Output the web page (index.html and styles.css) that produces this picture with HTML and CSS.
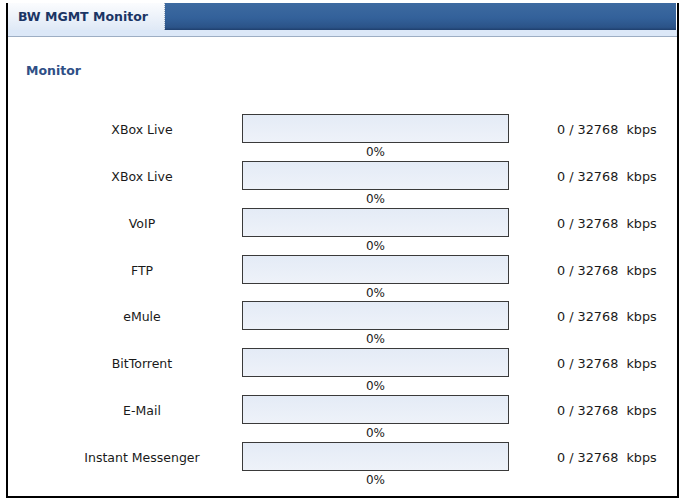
FILE: index.html
```html
<!DOCTYPE html>
<html>
<head>
<meta charset="utf-8">
<link rel="stylesheet" href="styles.css">
</head>
<body>
<div class="frame">
  <div class="header">
    <div class="tabs">
      <div class="tab">BW MGMT Monitor</div>
      <div class="bar-fill"></div>
    </div>
    <div class="strip"></div>
  </div>
  <div class="content">
    <h2 class="title">Monitor</h2>
    <div class="rows">
      <div class="row"><div class="label">XBox Live</div><div class="meter"></div><div class="rate">0 / 32768&nbsp; kbps</div><div class="pct">0%</div></div>
      <div class="row"><div class="label">XBox Live</div><div class="meter"></div><div class="rate">0 / 32768&nbsp; kbps</div><div class="pct">0%</div></div>
      <div class="row"><div class="label">VoIP</div><div class="meter"></div><div class="rate">0 / 32768&nbsp; kbps</div><div class="pct">0%</div></div>
      <div class="row"><div class="label">FTP</div><div class="meter"></div><div class="rate">0 / 32768&nbsp; kbps</div><div class="pct">0%</div></div>
      <div class="row"><div class="label">eMule</div><div class="meter"></div><div class="rate">0 / 32768&nbsp; kbps</div><div class="pct">0%</div></div>
      <div class="row"><div class="label">BitTorrent</div><div class="meter"></div><div class="rate">0 / 32768&nbsp; kbps</div><div class="pct">0%</div></div>
      <div class="row"><div class="label">E-Mail</div><div class="meter"></div><div class="rate">0 / 32768&nbsp; kbps</div><div class="pct">0%</div></div>
      <div class="row"><div class="label">Instant Messenger</div><div class="meter"></div><div class="rate">0 / 32768&nbsp; kbps</div><div class="pct">0%</div></div>
    </div>
  </div>
</div>
</body>
</html>
```
FILE: styles.css
```css
html, body {
  margin: 0;
  padding: 0;
  background: #ffffff;
}
body {
  font-family: "DejaVu Sans", "Liberation Sans", sans-serif;
  color: #1a1a1a;
}
.frame {
  margin: 3px 0 0 6px;
  width: 673px;
  height: 495px;
  box-sizing: border-box;
  border-left: 2px solid #000;
  border-right: 2px solid #000;
  border-bottom: 2px solid #000;
  overflow: hidden;
}
.tabs {
  display: flex;
  height: 27px;
}
.tab {
  width: 157px;
  box-sizing: border-box;
  padding: 0 0 0 10px;
  font-weight: bold;
  font-size: 12.5px;
  line-height: 27px;
  color: #1b3565;
  background: linear-gradient(#fbfcfe, #dfe9f6);
  border-right: 1px dotted #9aa8b8;
  white-space: nowrap;
}
.bar-fill {
  flex: 1;
  margin-right: 1px;
  background: linear-gradient(#3d6aa0 0%, #33619a 55%, #2b5388 90%, #1f3f6d 100%);
}
.strip {
  height: 6px;
  background: #dce8f8;
  border-bottom: 1px solid #9daec4;
}
.content {
  padding: 26px 0 0 18px;
}
.title {
  margin: 0;
  font-size: 12.5px;
  line-height: 16px;
  font-weight: bold;
  color: #2f4f86;
}
.rows {
  margin: 35px 0 0 18px;
}
.row {
  display: grid;
  grid-template-columns: 198px 267px 1fr;
  grid-template-rows: 29px 17.85px;
}
.label {
  grid-column: 1;
  grid-row: 1;
  font-size: 12.5px;
  text-align: center;
  align-self: center;
  padding-right: 2px;
  padding-top: 2px;
}
.meter {
  grid-column: 2;
  grid-row: 1;
  box-sizing: border-box;
  border: 1px solid #3a3a3a;
  background: linear-gradient(#e4ebf6, #eef2f9);
}
.rate {
  grid-column: 3;
  grid-row: 1;
  font-size: 12.8px;
  align-self: center;
  padding-left: 48px;
  padding-top: 2px;
  white-space: nowrap;
}
.pct {
  grid-column: 2;
  grid-row: 2;
  font-size: 12px;
  text-align: center;
  line-height: 19px;
}
```
